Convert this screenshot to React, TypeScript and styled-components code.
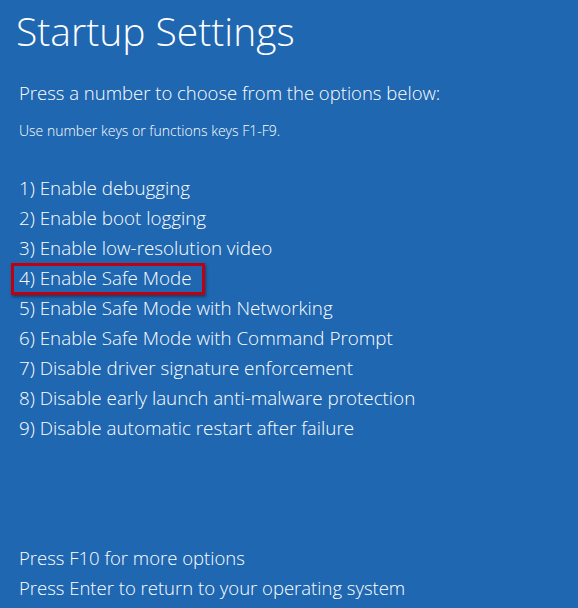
import styled, { createGlobalStyle } from "styled-components";

const Global = createGlobalStyle`
  html, body {
    margin: 0;
    padding: 0;
    background: #1f67b1;
  }
`;

const Screen = styled.div`
  width: 578px;
  height: 608px;
  box-sizing: border-box;
  background: #1f67b1;
  color: #ffffff;
  font-family: "Open Sans", "Noto Sans", sans-serif;
  font-weight: 300;
  display: flex;
  flex-direction: column;
  padding: 0 0 0 19px;
  overflow: hidden;
`;

const Title = styled.h1`
  margin: 4px 0 0 -3px;
  font-size: 39px;
  font-weight: 300;
  line-height: 54px;
`;

const Prompt = styled.div`
  margin-top: 20px;
  font-size: 18.5px;
  line-height: 30px;
`;

const Hint = styled.div`
  margin-top: 13px;
  font-size: 14px;
  line-height: 20px;
`;

const Options = styled.ol`
  list-style: none;
  margin: 32px 0 0 0;
  padding: 0;
`;

const Option = styled.li<{ $selected?: boolean }>`
  position: relative;
  font-size: 18.8px;
  line-height: 30px;
  white-space: nowrap;

  ${(p) =>
    p.$selected &&
    `
    &::before {
      content: "";
      position: absolute;
      left: -8px;
      top: 0;
      width: 194px;
      height: 32px;
      box-sizing: border-box;
      border: 3px solid #c0000f;
      box-shadow: 1px 2px 3px rgba(0, 0, 0, 0.4);
    }
  `}
`;

const Footer = styled.div`
  margin-top: auto;
  padding-bottom: 5px;
`;

const FooterLine = styled.div`
  font-size: 18.5px;
  line-height: 30px;
`;

const options = [
  "Enable debugging",
  "Enable boot logging",
  "Enable low-resolution video",
  "Enable Safe Mode",
  "Enable Safe Mode with Networking",
  "Enable Safe Mode with Command Prompt",
  "Disable driver signature enforcement",
  "Disable early launch anti-malware protection",
  "Disable automatic restart after failure",
];

const App = () => {
  return (
    <>
      <Global />
      <Screen>
        <Title>Startup Settings</Title>
        <Prompt>Press a number to choose from the options below:</Prompt>
        <Hint>Use number keys or functions keys F1-F9.</Hint>
        <Options>
          {options.map((label, i) => (
            <Option key={label} $selected={i === 3}>
              {i + 1}) {label}
            </Option>
          ))}
        </Options>
        <Footer>
          <FooterLine>Press F10 for more options</FooterLine>
          <FooterLine>Press Enter to return to your operating system</FooterLine>
        </Footer>
      </Screen>
    </>
  );
};

export default App;
